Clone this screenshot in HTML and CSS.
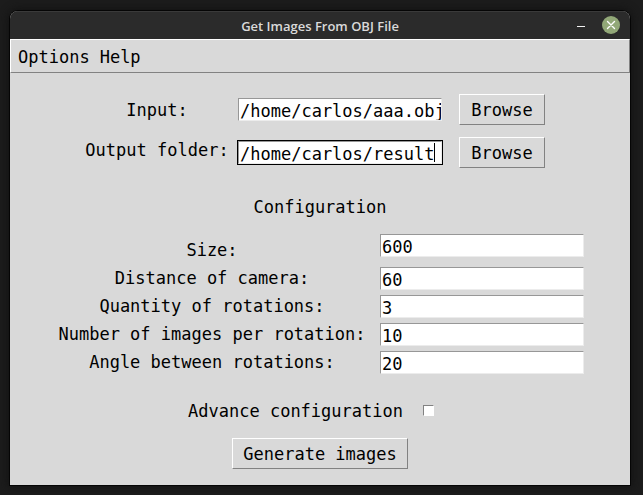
FILE: index.html
```html
<!DOCTYPE html>
<html lang="en">
<head>
  <meta charset="utf-8">
  <title>Get Images From OBJ File</title>
  <link rel="stylesheet" href="styles.css">
</head>
<body>
  <div class="window">
    <header class="titlebar">
      <h1 class="title">Get Images From OBJ File</h1>
      <div class="controls">
        <button class="control" type="button" aria-label="Minimize">
          <svg width="18" height="18" viewBox="0 0 18 18"><path d="M5 10.5h8" stroke="#f2f2f2" fill="none"/></svg>
        </button>
        <button class="control" type="button" aria-label="Close">
          <svg width="18" height="18" viewBox="0 0 18 18"><circle cx="9" cy="9" r="9" fill="#92a878"/><path d="M5.5 5.5l7 7M12.5 5.5l-7 7" stroke="#fff" stroke-width="1.4" stroke-linecap="round" fill="none"/></svg>
        </button>
      </div>
    </header>
    <nav class="menubar">
      <button class="menu" type="button">Options</button>
      <button class="menu" type="button">Help</button>
    </nav>
    <form class="form">
      <div class="files">
        <label class="label" for="input">Input:</label>
        <div class="field"><input class="entry" id="input" type="text" value="/home/carlos/aaa.obj"></div>
        <button class="button" type="button">Browse</button>
        <label class="label label-top" for="output">Output folder:</label>
        <div class="field field-active"><input class="entry" id="output" type="text" value="/home/carlos/result"><span class="caret"></span></div>
        <button class="button" type="button">Browse</button>
      </div>
      <h2 class="heading">Configuration</h2>
      <div class="settings">
        <label class="label" for="size">Size:</label>
        <input class="entry" id="size" type="text" value="600">
        <label class="label" for="distance">Distance of camera:</label>
        <input class="entry" id="distance" type="text" value="60">
        <label class="label" for="quantity">Quantity of rotations:</label>
        <input class="entry" id="quantity" type="text" value="3">
        <label class="label" for="number">Number of images per rotation:</label>
        <input class="entry" id="number" type="text" value="10">
        <label class="label" for="angle">Angle between rotations:</label>
        <input class="entry" id="angle" type="text" value="20">
      </div>
      <div class="advanced">
        <label class="label" for="advance">Advance configuration</label>
        <input class="check" id="advance" type="checkbox">
      </div>
      <button class="button" type="button">Generate images</button>
    </form>
  </div>
</body>
</html>
```

FILE: styles.css
```css
* {
  box-sizing: border-box;
}

body {
  margin: 0;
  min-height: 100vh;
  padding: 11px 13px 10px 10px;
  display: flex;
  background: #1c1c1c;
}

button,
input {
  font: inherit;
  color: inherit;
  margin: 0;
}

.window {
  flex: 1;
  display: flex;
  flex-direction: column;
  overflow: hidden;
  border-radius: 8px 8px 0 0;
  background: #d9d9d9;
  color: #000;
  font: 17px/23px "DejaVu Sans Mono", monospace;
  box-shadow: 0 0 0 1px #050505, 0 0 8px 2px #121212;
}

.titlebar {
  display: grid;
  grid-template-columns: 1fr auto 1fr;
  align-items: center;
  height: 28px;
  padding: 0 10px;
  background: #2b2b2b;
  border-top: 1px solid #3a3a3a;
}

.title {
  grid-column: 2;
  margin: 0;
  color: #dadada;
  font: 600 13px/22px "Open Sans", sans-serif;
}

.controls {
  display: flex;
  justify-content: flex-end;
  align-self: start;
  padding-top: 4px;
  gap: 12px;
}

.control {
  display: flex;
  padding: 0;
  border: 0;
  background: none;
}

.menubar {
  display: flex;
  gap: 10px;
  height: 34px;
  padding: 2px 7px 0;
  border: 1px solid;
  border-color: #fff #828282 #828282 #fff;
}

.menu {
  padding: 0;
  border: 0;
  background: none;
}

.form {
  display: flex;
  flex-direction: column;
  align-items: center;
  padding: 21px 0 16px;
}

.files {
  display: grid;
  grid-template-columns: 144px 206px 94px;
  column-gap: 8px;
  row-gap: 12px;
  align-items: center;
  margin-right: 10px;
}

.files .button {
  justify-self: end;
}

.label {
  padding-top: 2px;
  text-align: center;
  white-space: nowrap;
}

.label-top {
  align-self: start;
}

.field {
  position: relative;
  padding: 1px;
}

.field-active {
  background: #000;
}

.entry {
  display: block;
  width: 100%;
  height: 23px;
  padding: 3px 0 0 1px;
  border: 1px solid;
  border-color: #979797 #ececec #ececec #979797;
  border-radius: 0;
  background: #fff;
  outline: 0;
}

.caret {
  position: absolute;
  top: 3px;
  left: calc(19ch + 3px);
  width: 1px;
  height: 19px;
  background: #000;
}

.button {
  width: 86px;
  height: 31px;
  padding: 2px 0 0;
  border: 1px solid;
  border-color: #fff #828282 #828282 #fff;
  background: #d9d9d9;
}

.heading {
  margin: 28px 0 15px;
  font: inherit;
}

.settings {
  display: grid;
  grid-template-columns: 308px 204px;
  grid-template-rows: 28px repeat(4, 23px);
  column-gap: 14px;
  row-gap: 5px;
  margin-left: 2px;
}

.settings .label {
  align-self: end;
}

.advanced {
  display: flex;
  align-items: center;
  gap: 20px;
  margin: 24px 18px 15px 0;
}

.check {
  appearance: none;
  width: 11px;
  height: 11px;
  border: 1px solid;
  border-color: #828282 #fff #fff #828282;
  background: #fff;
}

.form > .button {
  width: 176px;
}
```
